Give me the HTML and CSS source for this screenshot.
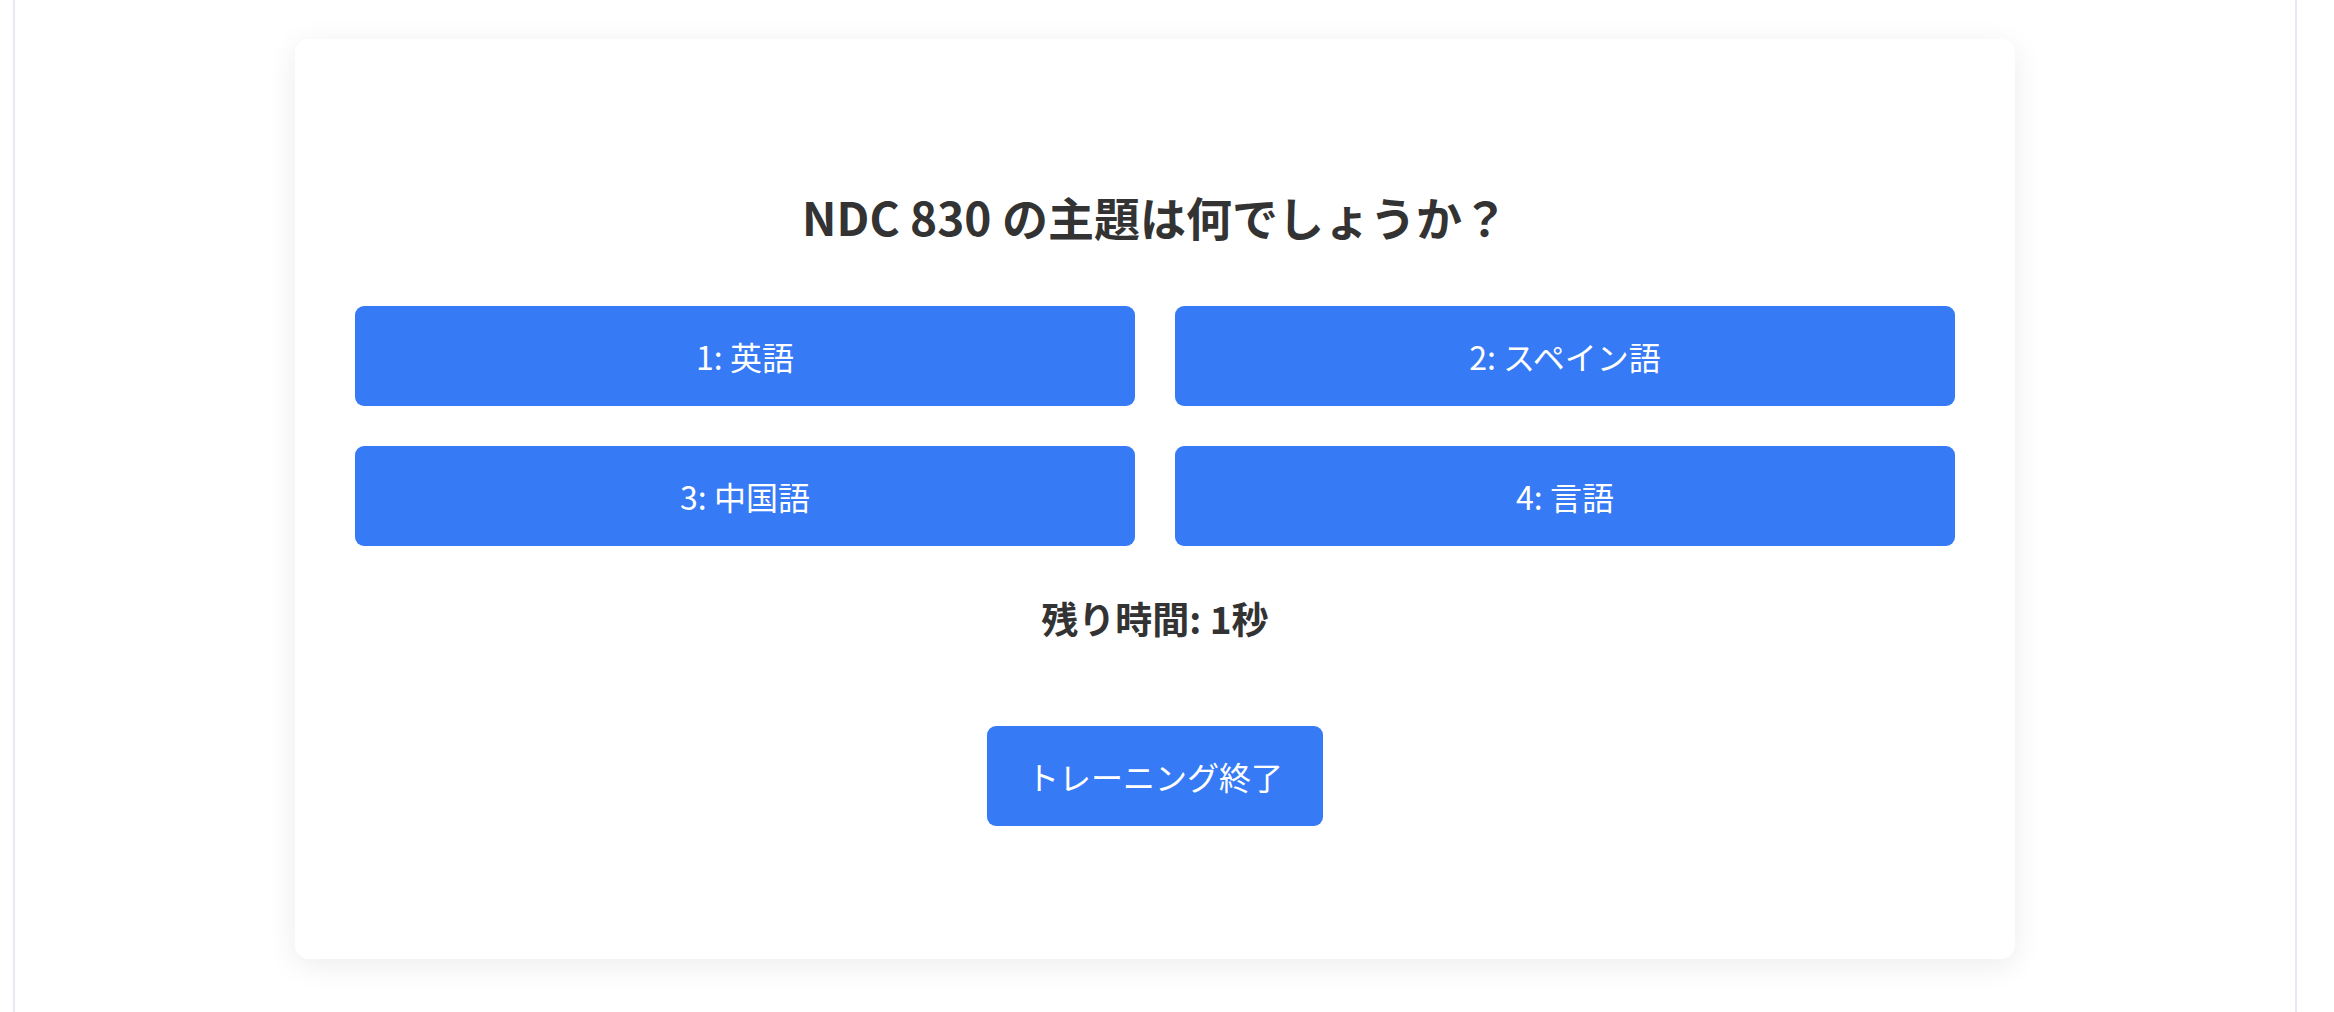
FILE: index.html
```html
<!DOCTYPE html>
<html lang="ja">
<head>
<meta charset="utf-8">
<title>NDC トレーニング</title>
<link rel="stylesheet" href="styles.css">
</head>
<body>
<div class="page">
  <main class="frame">
    <section class="card">
      <h1 class="question">NDC 830 の主題は何でしょうか？</h1>
      <div class="choices">
        <button class="choice">1: 英語</button>
        <button class="choice">2: スペイン語</button>
        <button class="choice">3: 中国語</button>
        <button class="choice">4: 言語</button>
      </div>
      <p class="timer">残り時間: 1秒</p>
      <div class="actions">
        <button class="end">トレーニング終了</button>
      </div>
    </section>
  </main>
</div>
</body>
</html>
```

FILE: styles.css
```css
* { box-sizing: border-box; }
html, body {
  margin: 0;
  padding: 0;
  background: #ffffff;
  font-family: "Noto Sans CJK JP", "Noto Sans", sans-serif;
  color: #333333;
}
.page {
  padding-left: 13px;
}
.frame {
  width: 2284px;
  min-height: 1012px;
  border-left: 2px solid #e9e8f1;
  border-right: 2px solid #e9e8f1;
  padding-top: 39px;
  display: flex;
  flex-direction: column;
  align-items: center;
}
.card {
  width: 1720px;
  height: 920px;
  background: #ffffff;
  border-radius: 14px;
  box-shadow: 0 6px 30px rgba(0, 0, 0, 0.08);
  padding: 141px 60px 133px;
  display: flex;
  flex-direction: column;
}
.question {
  margin: 0;
  font-size: 46px;
  line-height: 72px;
  font-weight: 700;
  text-align: center;
  color: #333333;
}
.choices {
  margin-top: 54px;
  display: grid;
  grid-template-columns: 1fr 1fr;
  column-gap: 40px;
  row-gap: 40px;
}
.choice, .end {
  height: 100px;
  border: none;
  border-radius: 9px;
  background: #377af6;
  color: #ffffff;
  font-family: "Noto Sans CJK JP", "Noto Sans", sans-serif;
  font-size: 32px;
  font-weight: 400;
  padding: 0;
}
.timer {
  margin: 45px 0 0;
  font-size: 37px;
  line-height: 54px;
  font-weight: 700;
  text-align: center;
  color: #333333;
}
.actions {
  margin-top: 81px;
  display: flex;
  justify-content: center;
}
.end {
  padding: 0 40px;
}
```
